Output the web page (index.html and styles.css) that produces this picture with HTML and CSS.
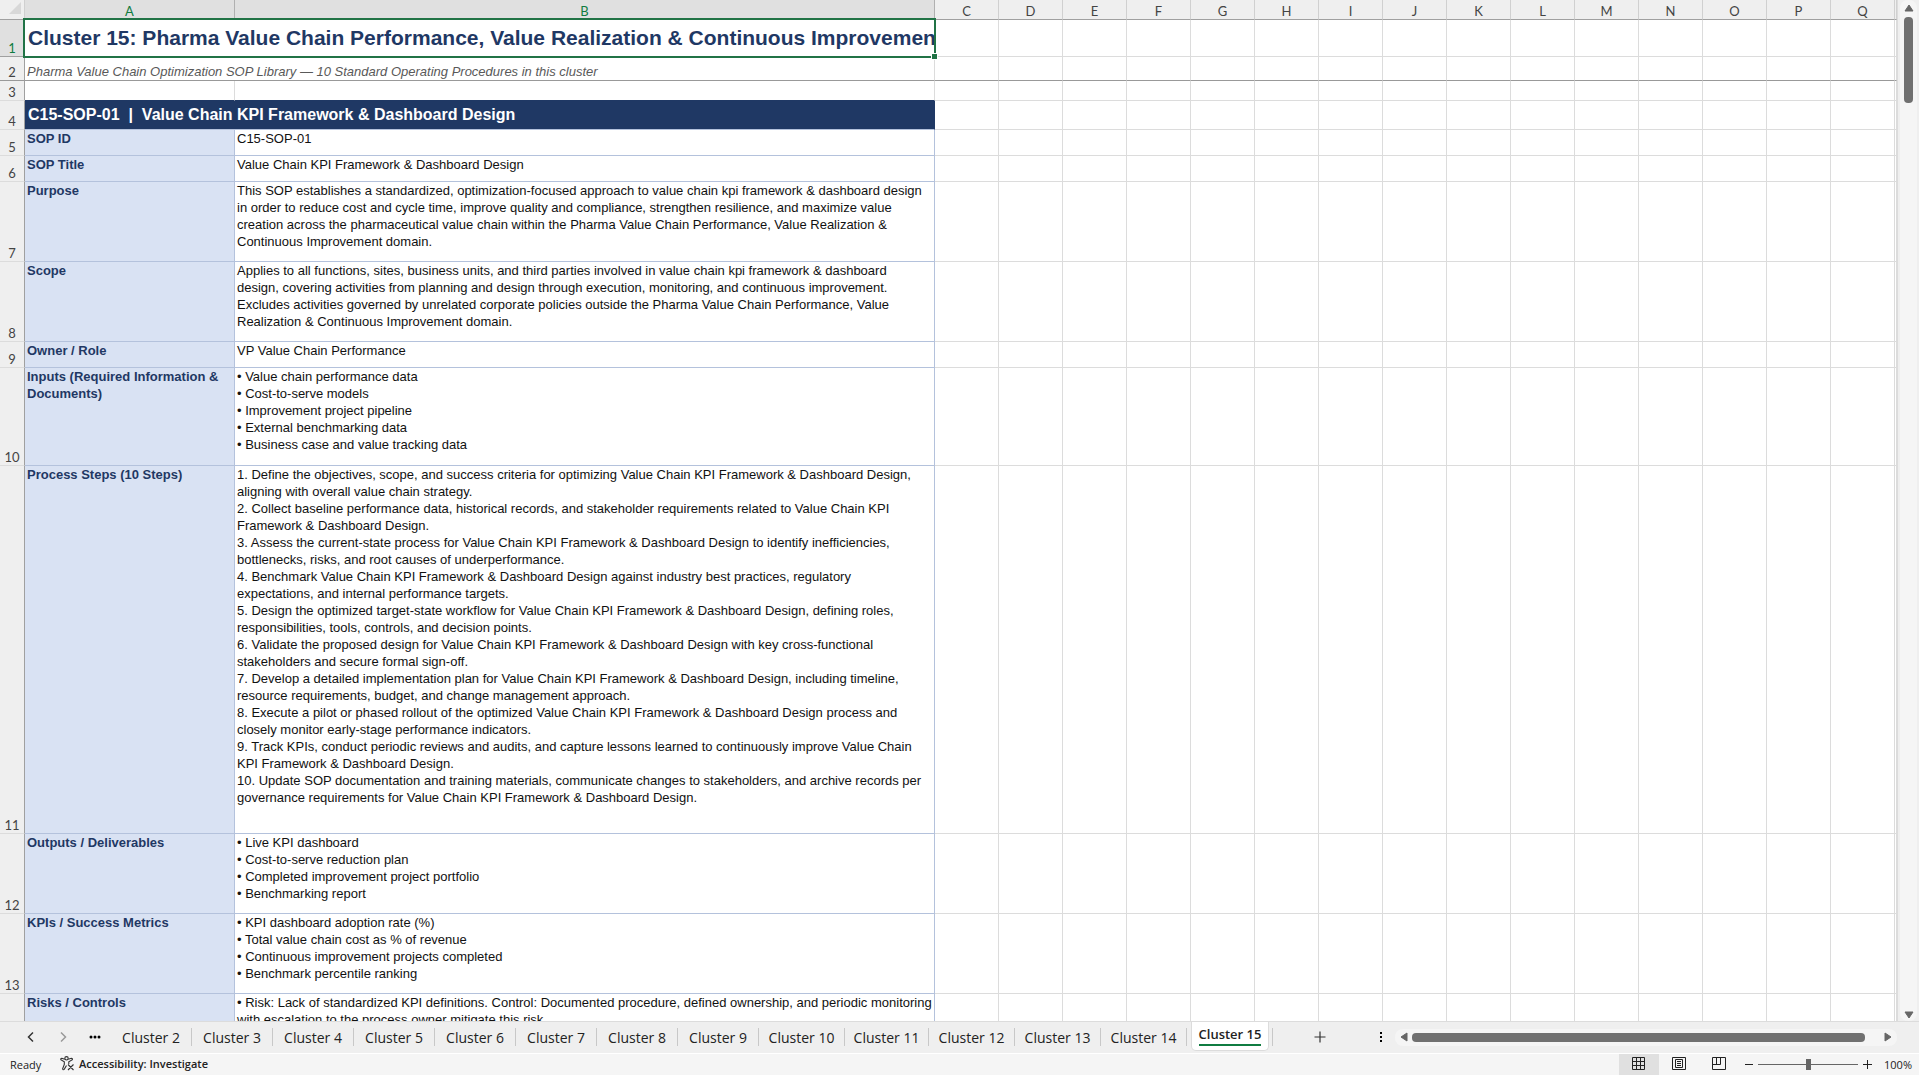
FILE: index.html
```html
<!DOCTYPE html>
<html lang="en">
<head>
    <meta charset="UTF-8">
    <meta name="viewport" content="width=device-width, initial-scale=1.0">
    <title>Pharma Value Chain SOP Library</title>
    <link rel="stylesheet" href="styles.css">
</head>
<body>

<main class="workspace">
    <div class="sheet">
        <table class="grid" id="grid">
            <thead>
                <tr id="column-heads">
                    <th class="corner"><svg width="12" height="12" viewBox="0 0 12 12"><path d="M12 0v12H0z"/></svg></th>
                    <th class="col-a selected">A</th>
                    <th class="col-b selected">B</th>
                </tr>
            </thead>
            <tbody>
                <tr class="row-title">
                    <th class="selected">1</th>
                    <td class="title" colspan="2"><div class="clip">Cluster 15: Pharma Value Chain Performance, Value Realization &amp; Continuous Improvement</div><span class="selection"></span></td>
                </tr>
                <tr class="row-subtitle">
                    <th>2</th>
                    <td class="subtitle" colspan="2">Pharma Value Chain Optimization SOP Library — 10 Standard Operating Procedures in this cluster</td>
                </tr>
                <tr class="row-blank">
                    <th>3</th>
                    <td class="above-banner"></td>
                    <td class="above-banner"></td>
                </tr>
                <tr class="row-banner">
                    <th>4</th>
                    <td class="banner" colspan="2">C15-SOP-01 &nbsp;|&nbsp; Value Chain KPI Framework &amp; Dashboard Design</td>
                </tr>
                <tr class="row-short">
                    <th>5</th>
                    <td class="label">SOP ID</td>
                    <td class="value">C15-SOP-01</td>
                </tr>
                <tr class="row-short">
                    <th>6</th>
                    <td class="label">SOP Title</td>
                    <td class="value">Value Chain KPI Framework &amp; Dashboard Design</td>
                </tr>
                <tr class="row-medium">
                    <th>7</th>
                    <td class="label">Purpose</td>
                    <td class="value">This SOP establishes a standardized, optimization-focused approach to value chain kpi framework &amp; dashboard design<br>in order to reduce cost and cycle time, improve quality and compliance, strengthen resilience, and maximize value<br>creation across the pharmaceutical value chain within the Pharma Value Chain Performance, Value Realization &amp;<br>Continuous Improvement domain.</td>
                </tr>
                <tr class="row-medium">
                    <th>8</th>
                    <td class="label">Scope</td>
                    <td class="value">Applies to all functions, sites, business units, and third parties involved in value chain kpi framework &amp; dashboard<br>design, covering activities from planning and design through execution, monitoring, and continuous improvement.<br>Excludes activities governed by unrelated corporate policies outside the Pharma Value Chain Performance, Value<br>Realization &amp; Continuous Improvement domain.</td>
                </tr>
                <tr class="row-short">
                    <th>9</th>
                    <td class="label">Owner / Role</td>
                    <td class="value">VP Value Chain Performance</td>
                </tr>
                <tr class="row-tall">
                    <th>10</th>
                    <td class="label">Inputs (Required Information &amp;<br>Documents)</td>
                    <td class="value">• Value chain performance data<br>• Cost-to-serve models<br>• Improvement project pipeline<br>• External benchmarking data<br>• Business case and value tracking data</td>
                </tr>
                <tr class="row-steps">
                    <th>11</th>
                    <td class="label">Process Steps (10 Steps)</td>
                    <td class="value">1. Define the objectives, scope, and success criteria for optimizing Value Chain KPI Framework &amp; Dashboard Design,<br>aligning with overall value chain strategy.<br>2. Collect baseline performance data, historical records, and stakeholder requirements related to Value Chain KPI<br>Framework &amp; Dashboard Design.<br>3. Assess the current-state process for Value Chain KPI Framework &amp; Dashboard Design to identify inefficiencies,<br>bottlenecks, risks, and root causes of underperformance.<br>4. Benchmark Value Chain KPI Framework &amp; Dashboard Design against industry best practices, regulatory<br>expectations, and internal performance targets.<br>5. Design the optimized target-state workflow for Value Chain KPI Framework &amp; Dashboard Design, defining roles,<br>responsibilities, tools, controls, and decision points.<br>6. Validate the proposed design for Value Chain KPI Framework &amp; Dashboard Design with key cross-functional<br>stakeholders and secure formal sign-off.<br>7. Develop a detailed implementation plan for Value Chain KPI Framework &amp; Dashboard Design, including timeline,<br>resource requirements, budget, and change management approach.<br>8. Execute a pilot or phased rollout of the optimized Value Chain KPI Framework &amp; Dashboard Design process and<br>closely monitor early-stage performance indicators.<br>9. Track KPIs, conduct periodic reviews and audits, and capture lessons learned to continuously improve Value Chain<br>KPI Framework &amp; Dashboard Design.<br>10. Update SOP documentation and training materials, communicate changes to stakeholders, and archive records per<br>governance requirements for Value Chain KPI Framework &amp; Dashboard Design.</td>
                </tr>
                <tr class="row-medium">
                    <th>12</th>
                    <td class="label">Outputs / Deliverables</td>
                    <td class="value">• Live KPI dashboard<br>• Cost-to-serve reduction plan<br>• Completed improvement project portfolio<br>• Benchmarking report</td>
                </tr>
                <tr class="row-medium">
                    <th>13</th>
                    <td class="label">KPIs / Success Metrics</td>
                    <td class="value">• KPI dashboard adoption rate (%)<br>• Total value chain cost as % of revenue<br>• Continuous improvement projects completed<br>• Benchmark percentile ranking</td>
                </tr>
                <tr class="row-medium">
                    <th></th>
                    <td class="label">Risks / Controls</td>
                    <td class="value">• Risk: Lack of standardized KPI definitions. Control: Documented procedure, defined ownership, and periodic monitoring<br>with escalation to the process owner mitigate this risk.</td>
                </tr>
            </tbody>
        </table>
    </div>
    <div class="scroll-y">
        <button class="arrow" aria-label="Scroll up"><svg width="10" height="8" viewBox="0 0 10 8"><path d="M5 1l4 6H1z"/></svg></button>
        <div class="thumb"></div>
        <button class="arrow arrow-end" aria-label="Scroll down"><svg width="10" height="8" viewBox="0 0 10 8"><path d="M5 7l4-6H1z"/></svg></button>
    </div>
</main>

<nav class="tab-bar">
    <div class="tab-nav">
        <button aria-label="Previous sheet"><svg width="10" height="12" viewBox="0 0 10 12"><path d="M7 1.500L2.500 6 7 10.500" fill="none" stroke="#333" stroke-width="1.500"/></svg></button>
        <button aria-label="Next sheet"><svg width="10" height="12" viewBox="0 0 10 12"><path d="M3 1.500L7.500 6 3 10.500" fill="none" stroke="#999" stroke-width="1.500"/></svg></button>
        <button aria-label="More sheets"><svg width="12" height="12" viewBox="0 0 12 12"><circle cx="2" cy="6" r="1.500"/><circle cx="6" cy="6" r="1.500"/><circle cx="10" cy="6" r="1.500"/></svg></button>
    </div>
    <button class="tab">Cluster 2</button>
    <button class="tab">Cluster 3</button>
    <button class="tab">Cluster 4</button>
    <button class="tab">Cluster 5</button>
    <button class="tab">Cluster 6</button>
    <button class="tab">Cluster 7</button>
    <button class="tab">Cluster 8</button>
    <button class="tab">Cluster 9</button>
    <button class="tab tab-wide">Cluster 10</button>
    <button class="tab tab-wide">Cluster 11</button>
    <button class="tab tab-wide">Cluster 12</button>
    <button class="tab tab-wide">Cluster 13</button>
    <button class="tab tab-wide">Cluster 14</button>
    <div class="tab-slot"><button class="tab-active"><span>Cluster 15</span></button></div>
    <button class="tab-add" aria-label="New sheet"><svg width="12" height="12" viewBox="0 0 12 12"><path d="M6 0.500v11M0.500 6h11" stroke="#333" stroke-width="1.200"/></svg></button>
    <div class="splitter"><svg width="3" height="12" viewBox="0 0 3 12"><path d="M0 1h2v2H0zM0 5h2v2H0zM0 9h2v2H0z"/></svg></div>
    <div class="scroll-x">
        <button class="arrow" aria-label="Scroll left"><svg width="8" height="10" viewBox="0 0 8 10"><path d="M1 5l6-4v8z"/></svg></button>
        <div class="thumb"></div>
        <button class="arrow arrow-end" aria-label="Scroll right"><svg width="8" height="10" viewBox="0 0 8 10"><path d="M7 5L1 1v8z"/></svg></button>
    </div>
</nav>

<footer class="status-bar">
    <span class="ready">Ready</span>
    <button class="accessibility">
        <svg width="15" height="15" viewBox="0 0 15 15" fill="none" stroke="#333" stroke-width="1.100"><circle cx="6.500" cy="2.300" r="1.700"/><path d="M4.800 3.300L1.800 2.300Q.6 2.300 .8 3.600L4.300 5.800V8.500L2.600 12.800Q3 14.200 4.200 13.400L6.500 9.500M8.200 3.300l3.200-1q1.200.1 1 1.300L8.800 5.800V8M8 8.500l5.500 5.500M13.500 8.500L8 14"/></svg>
        Accessibility: Investigate
    </button>
    <div class="views">
        <button class="view view-on" aria-label="Normal"><svg width="14" height="14" viewBox="0 0 14 14"><path d="M.5.5h12v12H.5zM4.500.5v12M8.500.5v12M.5 4.500h12M.5 8.500h12"/></svg></button>
        <button class="view" aria-label="Page layout"><svg width="14" height="14" viewBox="0 0 14 14"><path d="M.5.5h13v12H.5zM3.500 2.500h7v8h-7zM5 4.500h4M5 6.500h4M5 8.500h4"/></svg></button>
        <button class="view" aria-label="Page break preview"><svg width="14" height="14" viewBox="0 0 14 14"><path d="M.5.5h13v12H.5zM4.500.5v7M.5 7.500h8V.5"/></svg></button>
    </div>
    <div class="zoom">
        <button aria-label="Zoom out"><svg width="9" height="9" viewBox="0 0 9 9"><path d="M0 4.500h8"/></svg></button>
        <input type="range" min="0" max="100" value="50" aria-label="Zoom">
        <button aria-label="Zoom in"><svg width="9" height="9" viewBox="0 0 9 9"><path d="M0 4.500h9M4.500 0v9"/></svg></button>
        <span class="percent">100%</span>
    </div>
</footer>

<script>
    const heads = document.getElementById('column-heads');
    const rows = document.querySelectorAll('#grid tbody tr');

    // Column headings C to Q, plus the sliver of the next column
    for (const letter of [...'CDEFGHIJKLMNOPQ', '']) {
        const th = document.createElement('th');
        th.textContent = letter;
        th.className = letter ? 'col' : 'col-rest';
        heads.appendChild(th);
        rows.forEach(row => row.appendChild(document.createElement('td')));
    }
</script>

</body>
</html>
```
FILE: styles.css
```css
body {
    margin: 0;
    height: 100vh;
    display: flex;
    flex-direction: column;
    overflow: hidden;
    background-color: #efefef;
    font-family: "Open Sans", sans-serif;
    color: #222;
}
button {
    border: 0;
    padding: 0;
    background: none;
    font: inherit;
    color: inherit;
    display: flex;
    align-items: center;
    justify-content: center;
}

/* Sheet */
.workspace {
    flex: 1;
    min-height: 0;
    display: flex;
    gap: 2px;
}
.sheet {
    flex: 1;
    min-width: 0;
    overflow: hidden;
    background-color: #fff;
    border-right: 1px solid #dcdcdc;
}
.grid {
    width: 100%;
    table-layout: fixed;
    border-collapse: separate;
    border-spacing: 0;
    font-family: "Liberation Sans", Arial, sans-serif;
    font-size: 13px;
    line-height: 17px;
}
.grid th,
.grid td {
    box-sizing: border-box;
    padding: 0;
    border-right: 1px solid #dcdcdc;
    border-bottom: 1px solid #dcdcdc;
    white-space: nowrap;
}
.grid th {
    background-color: #efefef;
    font-family: Lato, sans-serif;
    font-size: 13px;
    line-height: 15px;
    font-weight: normal;
    color: #444;
}
.grid thead th {
    height: 20px;
    padding-top: 3px;
    border-right-color: #d0d0d0;
    border-bottom-color: #a0a0a0;
}
.grid tbody th {
    vertical-align: bottom;
    border-right-color: #a0a0a0;
}
.grid th.selected {
    background-color: #e0e0e0;
    color: #107c41;
    border-bottom-color: #a0a0a0;
}
.grid thead th.selected {
    border-right-color: #b0b0b0;
}
.grid .corner {
    width: 25px;
    padding: 0 3px 3px 0;
    text-align: right;
    line-height: 12px;
}
.corner svg {
    display: block;
    margin-left: auto;
    fill: #d8d8d8;
}
.col-a {
    width: 210px;
}
.col-b {
    width: 700px;
}
.col {
    width: 64px;
}
.row-title {
    height: 37px;
}
.row-subtitle {
    height: 24px;
}
.row-blank {
    height: 20px;
}
.row-banner {
    height: 29px;
}
.row-short {
    height: 26px;
}
.row-medium {
    height: 80px;
}
.row-tall {
    height: 98px;
}
.row-steps {
    height: 368px;
}
.grid .title {
    position: relative;
    padding-left: 3px;
    font-size: 21px;
    line-height: 24px;
    font-weight: bold;
    color: #1f3864;
}
.clip {
    overflow: hidden;
}
.selection {
    position: absolute;
    inset: -2px -2px -2px -2px;
    border: 2px solid #217346;
}
.selection::after {
    content: "";
    position: absolute;
    right: -4px;
    bottom: -4px;
    width: 5px;
    height: 5px;
    border: 1px solid #fff;
    background-color: #217346;
}
.grid .row-subtitle th,
.grid .row-subtitle td {
    border-bottom-color: #999;
}
.grid .above-banner {
    border-bottom-color: #1f3864;
}
.grid .subtitle {
    padding-left: 2px;
    vertical-align: bottom;
    font-style: italic;
    color: #595959;
}
.grid .banner {
    padding: 0 0 2px 3px;
    background-color: #1f3864;
    border-color: #1f3864;
    border-bottom-color: #b4c2dc;
    font-size: 16px;
    font-weight: bold;
    color: #fff;
}
.grid .label,
.grid .value {
    vertical-align: top;
    border-color: #b4c2dc;
}
.grid .label {
    padding-left: 2px;
    background-color: #d9e2f3;
    font-weight: bold;
    color: #1f3864;
}
.grid .value {
    padding-left: 2px;
    overflow: hidden;
    color: #111;
}

/* Scroll bars */
.scroll-y {
    width: 17px;
    margin-right: 2px;
    padding: 4px 0 2px;
    box-sizing: border-box;
    display: flex;
    flex-direction: column;
    align-items: center;
    gap: 5px;
    border-radius: 8px;
    background-color: #f5f5f5;
}
.scroll-y .thumb {
    width: 9px;
    height: 86px;
    border-radius: 4px;
    background-color: #707070;
}
.scroll-y .arrow-end {
    margin-top: auto;
}
.arrow svg {
    fill: #666;
    stroke: #666;
    stroke-linejoin: round;
}
.scroll-x {
    flex: 1;
    height: 17px;
    margin-right: 22px;
    padding: 0 5px;
    box-sizing: border-box;
    display: flex;
    align-items: center;
    gap: 4px;
    border-radius: 8px;
    background-color: #f5f5f5;
}
.scroll-x .thumb {
    width: 92%;
    height: 9px;
    border-radius: 4px;
    background-color: #707070;
}
.scroll-x .arrow-end {
    margin-left: auto;
}

/* Sheet tabs */
.tab-bar {
    height: 32px;
    box-sizing: border-box;
    padding-bottom: 1px;
    display: flex;
    align-items: center;
    border-top: 1px solid #dcdcdc;
    font-size: 14px;
}
.tab-nav {
    width: 111px;
    box-sizing: border-box;
    padding-left: 15px;
    display: flex;
}
.tab-nav button {
    width: 32px;
    height: 18px;
}
.tab {
    width: 81px;
    height: 18px;
    border-right: 1px solid #c8c8c8;
    white-space: nowrap;
}
.tab-wide {
    width: 86px;
}
.tab-wide:nth-of-type(10) {
    width: 84px;
}
.tab-slot {
    height: 18px;
    padding: 0 3px 0 4px;
    border-right: 1px solid #c8c8c8;
}
.tab-active {
    width: 78px;
    height: 29px;
    margin-top: -6px;
    padding-bottom: 3px;
    border: 1px solid #dcdcdc;
    border-top: 0;
    border-radius: 0 0 5px 5px;
    background-color: #fff;
    font-weight: 600;
    font-size: 13px;
}
.tab-active span {
    line-height: 20px;
    border-bottom: 2px solid #107c41;
    white-space: nowrap;
}
.tab-add {
    width: 94px;
    height: 18px;
}
.splitter {
    width: 28px;
    display: flex;
    justify-content: center;
}

/* Status bar */
.status-bar {
    height: 22px;
    box-sizing: border-box;
    padding-left: 10px;
    display: flex;
    align-items: stretch;
    border-top: 1px solid #fff;
    background-color: #f5f5f5;
    font-size: 11px;
}
.ready {
    width: 50px;
    line-height: 22px;
}
.accessibility {
    gap: 4px;
    padding-bottom: 2px;
    font-weight: 600;
}
.views {
    margin-left: auto;
    display: flex;
}
.view {
    width: 40px;
    padding-bottom: 1px;
}
.view-on {
    background-color: #e0e0e0;
}
.view svg,
.zoom svg {
    fill: none;
    stroke: #222;
}
.zoom {
    padding: 0 7px 1px 5px;
    display: flex;
    align-items: center;
    gap: 4px;
}
.zoom button {
    width: 10px;
}
.zoom input {
    appearance: none;
    width: 100px;
    height: 11px;
    margin: 0;
    background: linear-gradient(#666, #666) center / 100% 1px no-repeat;
}
.zoom input::-webkit-slider-thumb {
    appearance: none;
    width: 5px;
    height: 11px;
    background-color: #666;
}
.percent {
    padding-left: 8px;
}
```
